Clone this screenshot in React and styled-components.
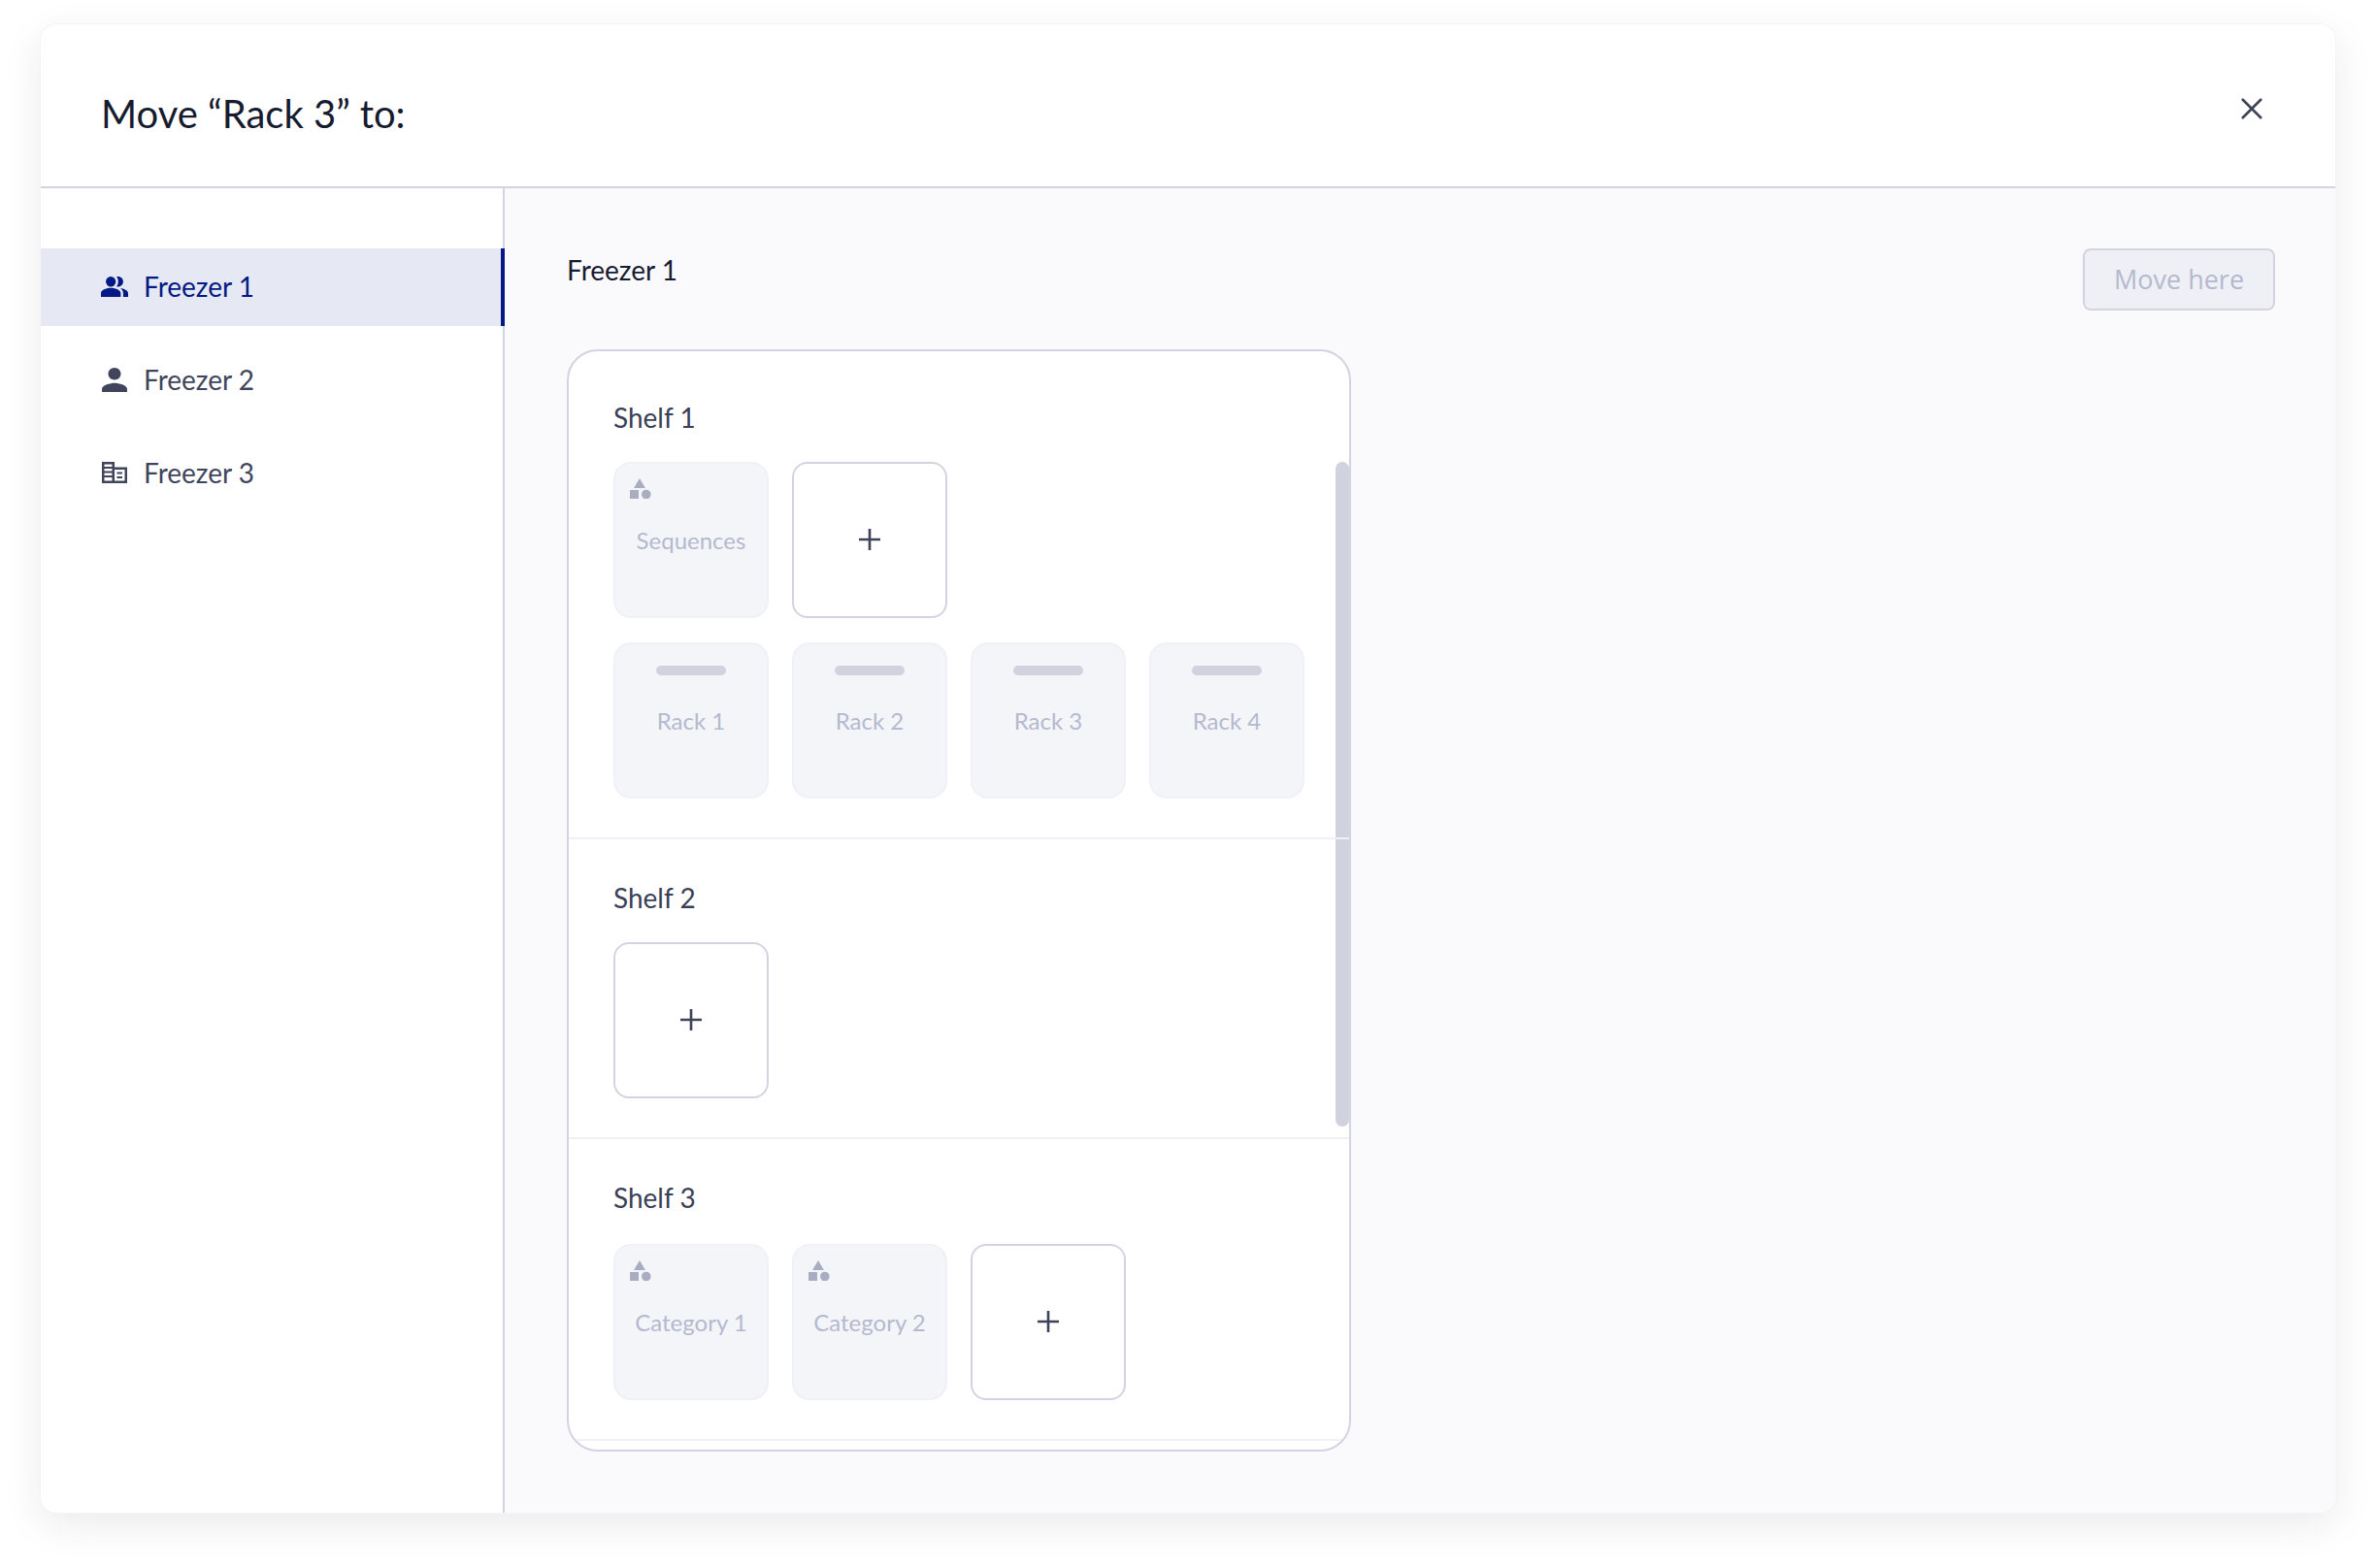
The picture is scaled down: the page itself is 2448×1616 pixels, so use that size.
import React from 'react'
import styled, { createGlobalStyle } from 'styled-components'

const GlobalStyle = createGlobalStyle`
  html, body {
    margin: 0;
    padding: 0;
    background: #fff;
    font-family: Lato, "Liberation Sans", sans-serif;
  }
`

const freezers = [
  { name: 'Freezer 1', icon: 'people', active: true },
  { name: 'Freezer 2', icon: 'person' },
  { name: 'Freezer 3', icon: 'building' },
]

const shelves = [
  { name: 'Shelf 1', gap: 26, rows: [
    [{ kind: 'category', label: 'Sequences' }, { kind: 'add' }],
    [{ kind: 'rack', label: 'Rack 1' }, { kind: 'rack', label: 'Rack 2' }, { kind: 'rack', label: 'Rack 3' }, { kind: 'rack', label: 'Rack 4' }],
  ] },
  { name: 'Shelf 2', gap: 26, rows: [[{ kind: 'add' }]] },
  { name: 'Shelf 3', gap: 28, rows: [[{ kind: 'category', label: 'Category 1' }, { kind: 'category', label: 'Category 2' }, { kind: 'add' }]] },
]

function NavIcon({ type }) {
  if (type === 'people') {
    return (
      <svg width="28" height="21" viewBox="1 4 22 16" fill="currentColor" preserveAspectRatio="none">
        <path d="M16.67 13.13C18.04 14.06 19 15.32 19 17v3h4v-3c0-2.18-3.57-3.47-6.33-3.87z" />
        <circle cx="9" cy="8" r="4" />
        <path d="M15 12c2.21 0 4-1.79 4-4s-1.79-4-4-4c-.47 0-.91.1-1.33.24C14.5 5.27 15 6.58 15 8s-.5 2.73-1.33 3.76c.42.14.86.24 1.33.24z" />
        <path d="M9 13c-2.67 0-8 1.34-8 4v3h16v-3c0-2.66-5.33-4-8-4z" />
      </svg>
    )
  }
  if (type === 'person') {
    return (
      <svg width="26" height="25" viewBox="4 4 16 16" fill="currentColor" preserveAspectRatio="none">
        <path d="M12 12c2.21 0 4-1.79 4-4s-1.79-4-4-4-4 1.79-4 4 1.79 4 4 4zm0 2c-2.67 0-8 1.34-8 4v2h16v-2c0-2.66-5.33-4-8-4z" />
      </svg>
    )
  }
  return (
    <svg width="26" height="22" viewBox="0 0 26 22" fill="currentColor">
      <path fillRule="evenodd" d="M0 0h13v5.500h13V22H0V0zm2.500 2.500V5h8V2.500h-8zm0 4.500v2.500h8V7h-8zm0 4.500V14h8v-2.500h-8zm0 4.500v3.500h8V16h-8zM13 8v11.500h10.500V8H13z" />
      <path d="M15.500 10.500h5.500v2h-5.500zM15.500 15h5.500v2h-5.500z" />
    </svg>
  )
}

function CategoryIcon() {
  return (
    <svg width="22" height="21" viewBox="0 0 22 21" fill="currentColor">
      <polygon points="10,0 16,10 4,10" />
      <rect x="0" y="12" width="9" height="9" />
      <circle cx="16.800" cy="16.500" r="4.800" />
    </svg>
  )
}

function Tile({ kind, label }) {
  if (kind === 'add') {
    return (
      <AddTile>
        <svg width="22" height="22" viewBox="0 0 22 22" fill="none" stroke="currentColor" strokeWidth="2.600">
          <path d="M11 0v22M0 11h22" />
        </svg>
      </AddTile>
    )
  }
  return (
    <ItemTile>
      {kind === 'category' && <TileIcon><CategoryIcon /></TileIcon>}
      {kind === 'rack' && <RackBar />}
      {label}
    </ItemTile>
  )
}

export default function App() {
  return (
    <>
      <GlobalStyle />
      <Page>
        <Modal>
          <Header>
            <Title>Move “Rack 3” to:</Title>
            <CloseButton>
              <svg width="22" height="22" viewBox="0 0 22 22" fill="none" stroke="currentColor" strokeWidth="2.600">
                <path d="M1 1l20 20M21 1L1 21" />
              </svg>
            </CloseButton>
          </Header>
          <Body>
            <Sidebar>
              {freezers.map((f) => (
                <NavRow key={f.name} $active={f.active}>
                  <NavIconSlot><NavIcon type={f.icon} /></NavIconSlot>
                  {f.name}
                </NavRow>
              ))}
            </Sidebar>
            <Main>
              <MainTop>
                <MainTitle>Freezer 1</MainTitle>
                <MoveButton>Move here</MoveButton>
              </MainTop>
              <ShelfCard>
                <Scrollbar />
                {shelves.map((shelf) => (
                  <Shelf key={shelf.name}>
                    <ShelfName $gap={shelf.gap}>{shelf.name}</ShelfName>
                    <TileRows>
                      {shelf.rows.map((row, i) => (
                        <TileRow key={i}>
                          {row.map((t, j) => <Tile key={j} {...t} />)}
                        </TileRow>
                      ))}
                    </TileRows>
                  </Shelf>
                ))}
              </ShelfCard>
            </Main>
          </Body>
        </Modal>
      </Page>
    </>
  )
}

const Page = styled.div`
  width: 2448px;
  height: 1616px;
  padding: 25px 42px 0;
  box-sizing: border-box;
  overflow: hidden;
`
const Modal = styled.div`
  width: 2364px;
  height: 1534px;
  display: flex;
  flex-direction: column;
  background: #fff;
  border-radius: 16px;
  overflow: hidden;
  box-shadow: 0 0 0 1px #f3f3f8, 0 12px 40px rgba(30, 34, 60, 0.09);
`
const Header = styled.div`
  height: 167px;
  flex-shrink: 0;
  display: flex;
  justify-content: space-between;
  align-items: flex-start;
  padding: 0 75px 0 62px;
  border-bottom: 2px solid #d2d4e2;
`
const Title = styled.h1`
  margin: 68px 0 0;
  font-size: 40px;
  line-height: 48px;
  font-weight: 400;
  color: #171b30;
`
const CloseButton = styled.div`
  margin-top: 76px;
  display: flex;
  color: #3d4259;
`
const Body = styled.div`
  flex: 1;
  min-height: 0;
  display: flex;
`
const Sidebar = styled.div`
  width: 478px;
  flex-shrink: 0;
  box-sizing: border-box;
  padding-top: 62px;
  display: flex;
  flex-direction: column;
  gap: 16px;
  border-right: 2px solid #d2d4e2;
`
const NavRow = styled.div`
  height: 80px;
  box-sizing: border-box;
  margin-right: -2px;
  display: flex;
  align-items: center;
  padding: 0 0 2px 62px;
  font-size: 28px;
  color: ${(p) => (p.$active ? '#031a85' : '#40455c')};
  background: ${(p) => (p.$active ? '#e6e8f3' : 'transparent')};
  border-right: 4px solid ${(p) => (p.$active ? '#031a85' : 'transparent')};
`
const NavIconSlot = styled.span`
  width: 28px;
  margin-right: 16px;
  display: flex;
  justify-content: center;
  align-items: center;
`
const Main = styled.div`
  flex: 1;
  min-width: 0;
  background: #fafafc;
  padding: 62px 62px 0 64px;
`
const MainTop = styled.div`
  display: flex;
  justify-content: space-between;
  align-items: flex-start;
`
const MainTitle = styled.div`
  font-size: 28px;
  line-height: 44px;
  color: #171b30;
`
const MoveButton = styled.div`
  width: 198px;
  height: 64px;
  box-sizing: border-box;
  display: flex;
  align-items: center;
  justify-content: center;
  padding-bottom: 2px;
  font-family: "Open Sans", sans-serif;
  font-size: 27px;
  color: #b4b9cf;
  background: #eff0f5;
  border: 2px solid #d2d4e2;
  border-radius: 8px;
`
const ShelfCard = styled.div`
  position: relative;
  width: 808px;
  height: 1136px;
  margin-top: 40px;
  box-sizing: border-box;
  padding-top: 8px;
  background: #fff;
  border: 2px solid #d2d4e2;
  border-radius: 32px;
  overflow: hidden;
`
const Scrollbar = styled.div`
  position: absolute;
  top: 114px;
  right: 0;
  width: 14px;
  height: 685px;
  background: #d0d2de;
  border-radius: 7px;
`
const Shelf = styled.section`
  position: relative;
  padding: 40px 46px;
  border-bottom: 2px solid #f0f1f6;
`
const ShelfName = styled.div`
  font-size: 28px;
  line-height: 40px;
  color: #3a3f57;
  margin-bottom: ${(p) => p.$gap}px;
`
const TileRows = styled.div`
  display: flex;
  flex-direction: column;
  gap: 25px;
`
const TileRow = styled.div`
  display: flex;
  gap: 24px;
`
const ItemTile = styled.div`
  position: relative;
  width: 160px;
  height: 161px;
  box-sizing: border-box;
  display: flex;
  align-items: center;
  justify-content: center;
  font-size: 24px;
  color: #b4b9cf;
  background: #f4f5f9;
  border: 2px solid #f0f1f6;
  border-radius: 18px;
`
const AddTile = styled.div`
  width: 160px;
  height: 161px;
  box-sizing: border-box;
  display: flex;
  align-items: center;
  justify-content: center;
  padding-bottom: 2px;
  color: #3d4259;
  background: #fff;
  border: 2px solid #d2d4e2;
  border-radius: 16px;
`
const TileIcon = styled.span`
  position: absolute;
  top: 15px;
  left: 15px;
  display: flex;
  color: #a9adc2;
`
const RackBar = styled.span`
  position: absolute;
  top: 22px;
  left: 50%;
  width: 72px;
  height: 10px;
  margin-left: -36px;
  border-radius: 5px;
  background: #d0d2de;
`
